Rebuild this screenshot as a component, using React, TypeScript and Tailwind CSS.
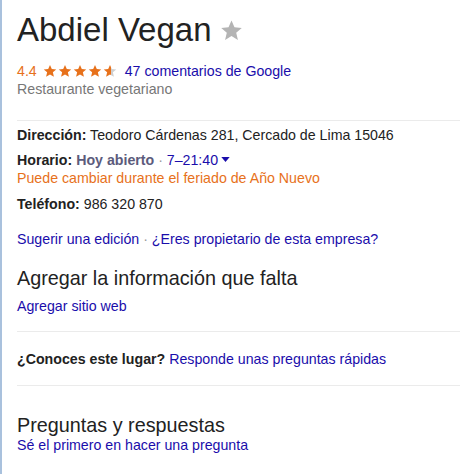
const LINK = "text-[#1a0dab]";

function Star({ fill }: { fill: "full" | "half" | "empty" }) {
  const id = "half-grad";
  return (
    <svg width="14" height="14" viewBox="0 0 24 24" className="shrink-0">
      {fill === "half" && (
        <defs>
          <linearGradient id={id}>
            <stop offset="55%" stopColor="#e7711b" />
            <stop offset="55%" stopColor="#cfcfcf" />
          </linearGradient>
        </defs>
      )}
      <path
        d="M12 1.5l3.1 7.1 7.6.7-5.8 5 1.8 7.5L12 17.8l-6.7 4 1.8-7.5-5.8-5 7.6-.7z"
        fill={fill === "full" ? "#e7711b" : fill === "half" ? `url(#${id})` : "#cfcfcf"}
      />
    </svg>
  );
}

function Divider() {
  return <div className="h-px bg-[#ebebeb]" />;
}

export default function App() {
  return (
    <div className="w-[460px] h-[474px] bg-white font-['Liberation_Sans',Arial,sans-serif] text-[#222] overflow-hidden">
      <div className="h-full border-l-2 border-[#a9c1dd] pl-[15px]">
        {/* Header */}
        <div className="pt-[12px] flex items-center gap-[8px]">
          <h1 className="text-[33px] leading-[36px] text-[#222]">Abdiel Vegan</h1>
          <svg width="23" height="23" viewBox="0 0 24 24" className="mt-[1px]">
            <path
              d="M12 1.5l3.1 7.1 7.6.7-5.8 5 1.8 7.5L12 17.8l-6.7 4 1.8-7.5-5.8-5 7.6-.7z"
              fill="#b4b4b4"
            />
          </svg>
        </div>

        <div className="mt-[14px] flex items-center gap-[4px] text-[14.2px] leading-[18px]">
          <span className="text-[#e7711b] mr-[2px]">4.4</span>
          <div className="flex gap-[1px]">
            <Star fill="full" />
            <Star fill="full" />
            <Star fill="full" />
            <Star fill="full" />
            <Star fill="half" />
          </div>
          <a className={`${LINK} ml-[4px]`}>47 comentarios de Google</a>
        </div>
        <div className="text-[14.2px] leading-[18px] text-[#777]">Restaurante vegetariano</div>

        <div className="mt-[22px]">
          <Divider />
        </div>

        <div className="text-[14.2px] leading-[18px]">
          <div className="mt-[5px]">
            <span className="font-bold">Dirección:</span> Teodoro Cárdenas 281, Cercado de Lima 15046
          </div>
          <div className="mt-[7px]">
            <span className="font-bold">Horario:</span>{" "}
            <span className="font-bold text-[#5c5b7c]">Hoy abierto</span>
            <span className="text-[#999]"> · </span>
            <span className={LINK}>7–21:40</span>
            <svg width="9" height="5" viewBox="0 0 10 6" className="inline-block ml-[3px] mb-[3px]">
              <path d="M0 0h10L5 6z" fill="#1a0dab" />
            </svg>
          </div>
          <div className="text-[#e7711b]">Puede cambiar durante el feriado de Año Nuevo</div>
          <div className="mt-[8px]">
            <span className="font-bold">Teléfono:</span> 986 320 870
          </div>
          <div className="mt-[17px]">
            <a className={LINK}>Sugerir una edición</a>
            <span className="text-[#999]"> · </span>
            <a className={LINK}>¿Eres propietario de esta empresa?</a>
          </div>
        </div>

        <div className="mt-[18px] text-[19.8px] leading-[24px] text-[#222]">Agregar la información que falta</div>
        <div className={`mt-[7px] text-[14.2px] leading-[18px] ${LINK}`}>Agregar sitio web</div>

        <div className="mt-[16px]">
          <Divider />
        </div>

        <div className="mt-[18px] text-[14.2px] leading-[18px]">
          <span className="font-bold">¿Conoces este lugar?</span>{" "}
          <a className={LINK}>Responde unas preguntas rápidas</a>
        </div>

        <div className="mt-[17px]">
          <Divider />
        </div>

        <div className="mt-[27px] text-[19.8px] leading-[24px] text-[#222]">Preguntas y respuestas</div>
        <div className={`-mt-[1px] text-[14.2px] leading-[18px] ${LINK}`}>Sé el primero en hacer una pregunta</div>
      </div>
    </div>
  );
}
